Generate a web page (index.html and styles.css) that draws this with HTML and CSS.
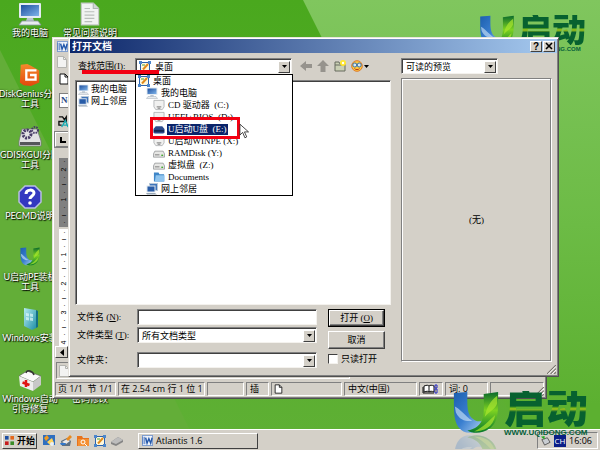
FILE: index.html
```html
<!DOCTYPE html>
<html lang="zh-CN">
<head>
<meta charset="utf-8">
<title>打开文档</title>
<link rel="stylesheet" href="styles.css">
</head>
<body>
<svg class="defs" aria-hidden="true">
  <defs>
    <linearGradient id="gBlue" x1="0" y1="0" x2="1" y2="1"><stop offset="0" stop-color="#1c5fae"/><stop offset=".5" stop-color="#3a7fd0"/><stop offset="1" stop-color="#b8d8f4"/></linearGradient>
    <linearGradient id="gGreen" x1="0" y1="0" x2="0" y2="1"><stop offset="0" stop-color="#0a6a2c"/><stop offset=".45" stop-color="#7ed321"/><stop offset="1" stop-color="#06782c"/></linearGradient>
    <linearGradient id="gPc" x1="0" y1="0" x2="1" y2="1"><stop offset="0" stop-color="#1d4f9e"/><stop offset="1" stop-color="#7fb4ea"/></linearGradient>
    <linearGradient id="gOrange" x1="0" y1="0" x2="0" y2="1"><stop offset="0" stop-color="#f58a2c"/><stop offset="1" stop-color="#e3480c"/></linearGradient>
    <linearGradient id="gTeal" x1="0" y1="0" x2="1" y2="1"><stop offset="0" stop-color="#b5ecf0"/><stop offset="1" stop-color="#1e8fa8"/></linearGradient>
    <symbol id="pc" viewBox="0 0 24 24"><rect x="1" y="1" width="22" height="15" rx="1" fill="#e4ebf2"/><rect x="3" y="3" width="18" height="11" fill="url(#gPc)"/><path d="M9 16h6l1 3H8z" fill="#b9c4cf"/><path d="M4 19h16l3 4H1z" fill="#e8ecef" stroke="#8a97a3" stroke-width=".8"/></symbol>
    <symbol id="net" viewBox="0 0 12 12"><rect x="3.500" y=".5" width="8" height="7" fill="#3f75bb" stroke="#b9c8d8"/><rect x="1" y="3" width="8" height="6" fill="#285ca8" stroke="#dfe7ee"/><path d="M0 10h9l2 1.500H1z" fill="#9aa8b6"/></symbol>
    <symbol id="desk" viewBox="0 0 12 12"><rect x="1.500" y="1.500" width="9" height="9" fill="#fff8dc" stroke="#2b62b0"/><path d="M0 0h3v3H0zM9 0h3v3H9zM0 9h3v3H0zM9 9h3v3H9z" fill="#4b86cc"/><path d="M4 8.500L9 3" stroke="#e08a1c" stroke-width="2"/><path d="M3 4h3" stroke="#49a03a"/></symbol>
    <symbol id="drive" viewBox="0 0 13 12"><path d="M2 4h9l1.500 3v3.500H.5V7z" fill="#e7e7e5" stroke="#8d9093" stroke-width=".8"/><path d="M2 8h5" stroke="#777"/><path d="M9 8.500h2" stroke="#44a830" stroke-width="1.500"/></symbol>
    <symbol id="disc" viewBox="0 0 13 12"><path d="M1 1h11v7l-2 3H3L1 8z" fill="#f1f1f0" stroke="#a4a7aa" stroke-width=".8"/><path d="M4 8h5M5 9.500h3" stroke="#777"/></symbol>
    <symbol id="usb" viewBox="0 0 13 12"><path d="M3 3h7l2.500 3v4L11 11H2L.5 10V6z" fill="#2d4c8d"/><path d="M1 7h11v2H1z" fill="#14264f"/></symbol>
    <symbol id="folder" viewBox="0 0 13 12"><path d="M1 1h5l1 2h5v8H1z" fill="#3e86c8"/><path d="M3 4h9.500v7H2z" fill="#8fc4ee"/></symbol>
    <symbol id="sheet" viewBox="0 0 18 22"><path d="M1 1h11l5 5v15H1z" fill="#f1f3f2" stroke="#c3c9c5"/><path d="M12 1v5h5" fill="#d1d8d5" stroke="#adb7b1"/><path d="M4 6h5M4 9h9M4 12h9M4 15h9M4 18h7" stroke="#b9bfbb"/></symbol>
    <symbol id="blank" viewBox="0 0 10 12"><path d="M.5.5h6l3 3v8h-9z" fill="#f3f3f2" stroke="#b4b4b0"/><path d="M6.500.5v3h3" fill="none" stroke="#b4b4b0"/></symbol>
    <symbol id="page" viewBox="0 0 10 12"><path d="M1 1h5l3 3v7H1z" fill="#fff" stroke="#111"/><path d="M6 1v3h3" fill="none" stroke="#111"/></symbol>
    <symbol id="word" viewBox="0 0 12 12"><rect x=".5" y=".5" width="11" height="11" fill="#eef3fb" stroke="#7b9bd0"/><path d="M1 2v8M3 2v8" stroke="#4471bd"/><path d="M4 3l1.500 6L7.500 4l2 5L11 3" fill="none" stroke="#2458aa" stroke-width="1.500"/></symbol>
    <symbol id="umark" viewBox="0 0 48 52"><path d="M1 2l14-1c0 14-1 24 7 29 5 3 8 1 11-1-5 13-14 17-22 13C2 38 1 25 1 14z" fill="url(#gBlue)"/><path d="M32 3l15-2c0 19 1 31-9 38-8 6-18 5-23 2 8-1 14-6 16-13 2-8 1-16 1-25z" fill="url(#gGreen)"/><path d="M46 5c-8 6-11 13-13 22 5-6 11-8 13-14zM44 25c-6 5-12 13-22 17 10 0 20-4 22-17z" fill="#a6e32d" opacity=".75"/><path d="M2 16c5 2 10 9 18 15-5 1-13 0-17-9z" fill="#c7e0f6" opacity=".65"/></symbol>
    <symbol id="down" viewBox="0 0 7 4"><path d="M0 0h7L3.500 4z"/></symbol>
    <symbol id="grip" viewBox="0 0 10 10"><path d="M0 10L10 0M4 10l6-6M8 10l2-2" stroke="#77736c" stroke-width="1.200"/><path d="M1.500 10L10 1.500M5.500 10L10 5.500" stroke="#fff"/></symbol>
  </defs>
</svg>

<main class="desktop">
  <svg class="wallpaper" viewBox="0 0 600 450" preserveAspectRatio="none" aria-hidden="true">
    <defs>
      <linearGradient id="gBase" x1="0" y1="0" x2="0" y2="1"><stop offset="0" stop-color="#4aa81e"/><stop offset="1" stop-color="#5fb035"/></linearGradient>
      <linearGradient id="gLight" x1="0" y1="0" x2="0" y2="1"><stop offset="0" stop-color="#80c65e"/><stop offset=".5" stop-color="#6cbb45"/><stop offset=".9" stop-color="#5cb030"/></linearGradient>
    </defs>
    <rect width="600" height="450" fill="url(#gBase)"/>
    <path d="M0 50L200 450H0z" fill="#63ae38"/>
    <path d="M303 0H600V450H528z" fill="url(#gLight)"/>
  </svg>

  <div class="brand brand-wall" aria-hidden="true">
    <svg><use href="#umark"/></svg>
    <div><b>启动</b><span>WWW.UQIDONG.COM</span></div>
  </div>

  <nav class="icons">
    <a href="#"><svg><use href="#pc"/></svg><span>我的电脑</span></a>
    <a href="#"><svg viewBox="0 0 24 26"><path d="M2 2L9 1l4 2 9 5v13l-9 4-8-1-4-3z" fill="url(#gOrange)"/><path d="M19 8H8v10h10v-5h-6" fill="none" stroke="#fff" stroke-width="2.500"/></svg><span>DiskGenius分区<br>工具</span></a>
    <a href="#"><svg viewBox="0 0 24 24"><path d="M4 5h15l4 12v5H1v-5z" fill="#e2e2e4" stroke="#77777c" stroke-width=".8"/><path d="M2 18h20v3H2z" fill="#55555b"/><circle cx="9" cy="10" r="4" fill="none" stroke="#463a66" stroke-width="3" stroke-dasharray="2 1"/><circle cx="17" cy="6" r="3" fill="none" stroke="#463a66" stroke-width="2" stroke-dasharray="1.500 1"/></svg><span>GDISKGUI分区<br>工具</span></a>
    <a href="#"><svg viewBox="0 0 24 24"><path d="M7 1h10l6 6v10l-6 6H7l-6-6V7z" fill="#3338c0" stroke="#b9bde2" stroke-width="1.500"/><path d="M8 9c0-5 8-5 8-1 0 3-4 3-4 6" fill="none" stroke="#fff" stroke-width="3"/><circle cx="12" cy="18" r="1.800" fill="#fff"/></svg><span>PECMD说明</span></a>
    <a href="#"><svg class="small"><use href="#umark"/></svg><span>U启动PE装机<br>工具</span></a>
    <a href="#"><svg viewBox="0 0 24 24"><path d="M6 1l12 2v18l-4 2-8-4z" fill="url(#gTeal)"/><path d="M18 3l2 1v16l-2 1z" fill="#147088"/><path d="M8 6l3 .5v3L8 9zM12 6.500l3 .5v3l-3-.5zM8 10l3 .5v3L8 13zM12 10.500l3 .5v3l-3-.5z" fill="#dff8fa" opacity=".7"/></svg><span>Windows安装</span></a>
    <a href="#"><svg viewBox="0 0 24 24"><path d="M1 8L9 3l14 5-8 6z" fill="#fafafa" stroke="#555" stroke-width=".6"/><path d="M1 8l14 6v9L2 18z" fill="#eee"/><path d="M15 14l8-6v9l-8 6z" fill="#c8c8c8"/><path d="M8 5c1-4 7-2 8 2" fill="none" stroke="#333" stroke-width="1.500"/><path d="M8 12v7M4.500 14.500l7 2.500" stroke="#e01515" stroke-width="2.500"/></svg><span>Windows启动<br>引导修复</span></a>
  </nav>
  <nav class="icons icons-second">
    <a href="#"><svg><use href="#sheet"/></svg><span>常见问题说明</span></a>
    <a href="#"><svg><use href="#pc"/></svg><span>密码修改</span></a>
  </nav>

  <section class="window editor" aria-label="Atlantis">
    <div class="toolstrip">
      <svg class="app"><use href="#word"/></svg>
      <svg class="doc"><use href="#blank"/></svg>
      <svg class="new"><use href="#page"/></svg>
      <div class="style-box">No</div>
      <svg class="find" viewBox="0 0 12 14"><path d="M1 2h4l2 3 2-3v5H1v4h3" fill="none" stroke="#111" stroke-width="1.500"/><path d="M4 13l4-7 3 7M6 11h4" fill="none" stroke="#18a9b0" stroke-width="1.500"/></svg>
      <div class="tab-stop"><svg viewBox="0 0 6 6"><path d="M1 0v5h5" fill="none" stroke="#000" stroke-width="2"/></svg></div>
      <div class="ruler ruler-margin"><i>·</i><i>2</i><i>·</i><i>ı</i><i>·</i><i>1</i><i>·</i><i>ı</i><i>·</i></div>
      <div class="ruler"><i>·</i><i>ı</i><i>·</i><i>1</i><i>·</i><i>ı</i><i>·</i><i>2</i><i>·</i><i>ı</i><i>·</i><i>3</i><i>·</i><i>ı</i><i>·</i><i>4</i></div>
      <button class="scroll" aria-label="向左"><svg viewBox="0 0 4 7"><path d="M4 0v7L0 3.500z"/></svg></button>
      <div class="sheet-tab"><svg><use href="#blank"/></svg></div>
    </div>
    <footer class="status">
      <span class="c-page">页 1/1&nbsp;&nbsp;节 1/1</span>
      <span class="c-pos">在 2.54 cm 行 1 位 1</span>
      <span class="c-gap"></span>
      <span class="c-ins">插</span>
      <span class="c-doc"><svg><use href="#page"/></svg></span>
      <span class="c-lang">中文(中国)</span>
      <span class="c-book"><svg viewBox="0 0 16 10"><path d="M1 2c3-1 4-1 5 0 1-1 3-1 5 0v6c-2-1-4-1-5 0-1-1-2-1-5 0zM6 2v6" fill="#fff" stroke="#111"/><path d="M0 3v6h11" fill="none" stroke="#111"/><path d="M12 1h2v3h-2zM12 5h2v4h-2z" fill="#ffef5b" stroke="#1c22d8"/></svg></span>
      <span class="c-word">词: 0</span>
      <span class="c-end"><svg class="grip"><use href="#grip"/></svg></span>
    </footer>
  </section>

  <section class="window dialog" role="dialog" aria-labelledby="dlg-title">
    <header class="titlebar">
      <h1 id="dlg-title">打开文档</h1>
      <button aria-label="帮助">?</button>
      <button aria-label="关闭"><svg viewBox="0 0 8 8"><path d="M1 1l6 6M7 1L1 7" stroke="#000" stroke-width="1.600"/></svg></button>
    </header>
    <div class="dialog-body">
      <div class="browse">
        <div class="lookup">
          <label for="look">查找范围(<u>I</u>):</label>
          <div class="look-wrap">
            <div class="combo">
              <svg class="lead"><use href="#desk"/></svg>
              <select id="look"><option>桌面</option></select>
              <span class="arrow"><svg><use href="#down"/></svg></span>
            </div>
            <ul class="tree">
              <li><svg><use href="#desk"/></svg><span>桌面</span></li>
              <li class="l1"><svg><use href="#pc"/></svg><span>我的电脑</span></li>
              <li class="l2"><svg><use href="#disc"/></svg><span>CD 驱动器&nbsp; (C:)</span></li>
              <li class="l2"><svg><use href="#disc"/></svg><span>UEFI+BIOS&nbsp; (D:)</span></li>
              <li class="l2 selected"><svg><use href="#usb"/></svg><span>U启动U盘&nbsp; (E:)</span></li>
              <li class="l2"><svg><use href="#disc"/></svg><span>U启动WINPE (X:)</span></li>
              <li class="l2"><svg><use href="#drive"/></svg><span>RAMDisk (Y:)</span></li>
              <li class="l2"><svg><use href="#drive"/></svg><span>虚拟盘&nbsp; (Z:)</span></li>
              <li class="l2"><svg><use href="#folder"/></svg><span>Documents</span></li>
              <li class="l1"><svg><use href="#net"/></svg><span>网上邻居</span></li>
            </ul>
            <div class="mark-line"></div>
            <div class="mark-box"></div>
            <svg class="cursor" viewBox="0 0 11 17"><path d="M1 1v12l3-3 2.500 6 2-1L6 9.500h4.500z" fill="#fff" stroke="#222" stroke-width=".9"/></svg>
          </div>
          <div class="tools">
            <button aria-label="后退"><svg viewBox="0 0 12 12"><path d="M0 6l6-5v3h6v4H6v3z" fill="#96938d"/></svg></button>
            <button aria-label="向上"><svg viewBox="0 0 12 12"><path d="M6 0l6 6H8.500v6h-5V6H0z" fill="#96938d"/></svg></button>
            <button aria-label="新建文件夹"><svg viewBox="0 0 12 12"><path d="M1 2h4l1 2h5v7H1z" fill="#c9cfb3" stroke="#666b5e"/><path d="M1 5h10" stroke="#666b5e"/><circle cx="9" cy="3" r="3" fill="#ffe72e"/><circle cx="9" cy="3" r="1.200" fill="#fff"/></svg></button>
            <button class="view" aria-label="查看"><svg viewBox="0 0 12 12"><circle cx="6" cy="6" r="5.300" fill="#ffc83d" stroke="#dd7a2d"/><circle cx="3.800" cy="5" r="2" fill="#dbeaf2" stroke="#3670a6"/><circle cx="8.200" cy="5" r="2" fill="#dbeaf2" stroke="#3670a6"/><path d="M3.500 8.500c1 1.500 4 1.500 5 0" fill="none" stroke="#b33a1d"/></svg><svg class="caret"><use href="#down"/></svg></button>
          </div>
        </div>
        <ul class="files">
          <li><svg><use href="#pc"/></svg>我的电脑</li>
          <li><svg><use href="#net"/></svg>网上邻居</li>
        </ul>
        <form class="form">
          <div class="fields">
            <div class="field"><label for="fname">文件名 (<u>N</u>):</label><input id="fname" type="text"></div>
            <div class="field"><label for="ftype">文件类型 (<u>T</u>):</label><div class="combo"><select id="ftype"><option>所有文档类型</option></select><span class="arrow"><svg><use href="#down"/></svg></span></div></div>
            <div class="field field-folder"><label for="fdir">文件夹：</label><div class="combo"><select id="fdir"><option></option></select><span class="arrow"><svg><use href="#down"/></svg></span></div></div>
          </div>
          <div class="actions">
            <button type="button" class="btn primary">打开 (<u>O</u>)</button>
            <button type="button" class="btn">取消</button>
            <label class="check"><input type="checkbox">只读打开</label>
          </div>
        </form>
      </div>
      <aside class="preview">
        <div class="combo"><select aria-label="预览"><option>可读的预览</option></select><span class="arrow"><svg><use href="#down"/></svg></span></div>
        <div class="preview-pane">(无)</div>
      </aside>
    </div>
    <svg class="grip"><use href="#grip"/></svg>
  </section>

  <footer class="taskbar">
    <button class="start"><svg viewBox="0 0 10 10"><path d="M0 0h4v4H0z" fill="#1d4fa3"/><path d="M6 0h4v4H6z" fill="#e4671b"/><path d="M0 6h4v4H0z" fill="#c61d1d"/><path d="M6 6h4v4H6z" fill="#3a8c26"/></svg>开始</button>
    <div class="quick">
      <svg viewBox="0 0 12 12"><rect width="12" height="10" fill="#2f6fc0"/><path d="M1 3l3-3 2 3-3 3z" fill="#f39b20"/><path d="M4 7l5-4 2 5-3 3z" fill="#ffd35c"/><circle cx="9" cy="9" r="2" fill="#e8eff8"/></svg>
      <svg viewBox="0 0 12 12"><path d="M1 6l6-3 4 3-1 5H2z" fill="#5f6f80"/><path d="M2 7l5-3 3 2-4 3z" fill="#e8e8e8"/><path d="M6 4l4-4 2 2-4 4z" fill="#e88a1e"/><path d="M0 8h6l-1 2H1z" fill="#3277c9"/></svg>
      <svg viewBox="0 0 12 12"><path d="M0 1h5l1 2h6v8H0z" fill="#e8731c"/><path d="M1 4h11v7H1z" fill="#f48f32"/><circle cx="6" cy="7" r="2" fill="none" stroke="#fff"/><path d="M7.500 8.500L10 11" stroke="#fff"/></svg>
      <svg><use href="#desk"/></svg>
      <svg viewBox="0 0 12 12"><path d="M0 7l7-5 5 3v2l-7 4-5-2z" fill="#858585"/><path d="M0 7l7-5 5 3-7 4z" fill="#bdbdbd"/></svg>
    </div>
    <button class="task"><svg><use href="#word"/></svg>Atlantis 1.6</button>
    <div class="tray">
      <svg viewBox="0 0 12 12"><path d="M2 5l6-2 3 5-6 3z" fill="#c9cdd1" stroke="#555"/><path d="M1 2l4-1v4z" fill="#25a823"/></svg>
      <span class="ime">CH</span>
      <time>16:06</time>
    </div>
  </footer>

  <div class="brand brand-mark">
    <div class="u"><svg><use href="#umark"/></svg><svg class="mirror" aria-hidden="true"><use href="#umark"/></svg></div>
    <div><b>启动</b><span>WWW.UQIDONG.COM</span></div>
  </div>
</main>
</body>
</html>
```
FILE: styles.css
```css
:root {
  --face: #d4d0c8;
  --shade: #808080;
  --dark: #404040;
  --light: #ffffff;
  --red: #f20012;
}

* { box-sizing: border-box; }

body {
  margin: 0;
  font: 9px/12px "Liberation Serif", "Noto Sans CJK SC", serif;
  color: #000;
}

svg { display: block; flex: none; overflow: visible; }
button, input, select { font: inherit; color: inherit; margin: 0; padding: 0; }
ul { list-style: none; margin: 0; padding: 0; }
.defs { position: absolute; width: 0; height: 0; }

/* Desktop */
.desktop { position: relative; height: 100vh; overflow: hidden; background: #5cb131; }
.wallpaper { position: absolute; inset: 0; width: 100%; height: 100%; }

.icons {
  position: absolute;
  top: 2px;
  left: 0;
  width: 60px;
  display: flex;
  flex-direction: column;
}
.icons-second { left: 60px; height: 427px; justify-content: space-between; }
.icons a {
  height: 61px;
  display: flex;
  flex-direction: column;
  align-items: center;
  gap: 2px;
  color: #fff;
  font: 9px/10px Lato, "Noto Sans CJK SC", sans-serif;
  text-align: center;
  text-decoration: none;
  white-space: nowrap;
  text-shadow: 1px 1px 1px #000, 0 0 2px #1c3a0c;
}
.icons svg { width: 24px; height: 24px; }
.icons .small { width: 20px; }

/* Brand */
.brand { position: absolute; display: flex; color: #05603a; font-family: "Liberation Sans", "Noto Sans CJK SC", sans-serif; }
.brand b, .brand span { display: block; white-space: nowrap; }
.brand b {
  font-weight: 900;
  background: linear-gradient(#07612f 0 42%, #5aa51c 46%, #a5c81c 50%, #07612f 58%);
  background-clip: text;
  -webkit-background-clip: text;
  color: transparent;
}
.brand span { font-weight: bold; }
.brand-wall { top: 15px; right: 14px; gap: 3px; }
.brand-wall svg { width: 36px; height: 38px; }
.brand-wall b { font-size: 34px; line-height: 30px; }
.brand-wall span { font-size: 6px; line-height: 8px; }
.brand-mark { right: 12px; bottom: 0; height: 59px; gap: 4px; }
.brand-mark svg { width: 48px; height: 50px; }
.brand-mark .u { height: 58px; overflow: hidden; }
.brand-mark .mirror { transform: scaleY(-1); opacity: .25; margin-top: -14px; }
.brand-mark b { font-size: 42px; line-height: 36px; }
.brand-mark span { font-size: 8px; line-height: 12px; }

/* Windows */
.window {
  position: absolute;
  display: flex;
  flex-direction: column;
  background: var(--face);
  border: 1px solid;
  border-color: #e6e3dd #505050 #505050 #e6e3dd;
  box-shadow: inset 1px 1px #fff, inset -1px -1px var(--shade);
}
.grip { position: absolute; right: 2px; bottom: 2px; width: 9px; height: 9px; }

/* Editor window, mostly behind the dialog */
.editor { left: 52px; right: 53px; top: 37px; bottom: 51px; padding: 2px; }
.toolstrip { width: 100%; flex: 1; display: flex; flex-direction: column; align-items: flex-start; }
.app { width: 11px; height: 11px; margin: 1px 2px 4px; }
.doc { width: 10px; height: 12px; margin-left: 2px; }
.new { width: 10px; height: 12px; margin: 5px 4px 8px; }
.style-box { width: 24px; height: 15px; margin-left: 4px; padding-left: 1px; background: #fff; border: 1px solid var(--shade); color: #294a85; font-weight: bold; }
.find { width: 11px; height: 13px; margin: 7px 3px 4px; }
.tab-stop { width: 18px; height: 15px; padding: 4px; border: 1px solid; border-color: #fff var(--shade) var(--shade) #fff; outline: 1px solid var(--shade); }
.tab-stop svg { width: 6px; height: 6px; }
.ruler {
  width: 10px;
  flex: 120;
  margin-left: 4px;
  display: flex;
  flex-direction: column;
  justify-content: space-around;
  align-items: center;
  overflow: hidden;
  background: #fff;
  font: 7px/7px "Liberation Sans", sans-serif;
}
.ruler i { font-style: normal; transform: rotate(-90deg); }
.ruler-margin { flex: 70; margin-top: 11px; margin-bottom: 2px; background: #808080; }
.scroll { width: 13px; height: 12px; display: grid; place-items: center; background: var(--face); border: 1px solid; border-color: #fff var(--dark) var(--dark) #fff; }
.scroll svg { width: 4px; height: 7px; }
.sheet-tab { width: 294px; height: 17px; margin: 4px 0 3px 1px; padding: 2px; border: 1px solid; border-color: var(--shade) #fff #fff var(--shade); }
.sheet-tab svg { width: 10px; height: 12px; }

.status { display: flex; gap: 2px; font: 9px/12px "Open Sans", "Noto Sans CJK SC", sans-serif; white-space: nowrap; }
.status span { height: 14px; padding: 0 3px; border: 1px solid; border-color: var(--shade) #fff #fff var(--shade); overflow: hidden; }
.status .c-page { width: 61px; padding: 0 2px; }
.status .c-pos { width: 87px; padding: 0 2px; }
.status .c-gap { width: 37px; }
.status .c-ins { width: 23px; }
.status .c-doc { width: 71px; padding: 1px 2px; }
.status .c-lang { width: 73px; }
.status .c-book { width: 24px; padding: 1px 3px; }
.status .c-word { width: 43px; }
.status .c-end { flex: 1; }
.c-doc svg { width: 9px; height: 10px; }
.c-book svg { width: 16px; height: 10px; }

/* Open dialog */
.dialog { left: 68px; right: 41px; top: 37px; bottom: 73px; padding: 1px; }
.titlebar {
  height: 14px;
  display: flex;
  align-items: center;
  gap: 1px;
  padding: 0 2px;
  background: linear-gradient(90deg, #0c2669, #a6caf0);
  color: #fff;
}
.titlebar h1 { flex: 1; margin: 0; font: bold 10px/14px "Noto Sans CJK SC", sans-serif; }
.titlebar button {
  width: 12px;
  height: 11px;
  display: grid;
  place-items: center;
  background: var(--face);
  border: 1px solid;
  border-color: #fff var(--dark) var(--dark) #fff;
  color: #000;
  font: bold 10px/9px "Liberation Sans", sans-serif;
}
.titlebar svg { width: 8px; height: 8px; }

.dialog-body { flex: 1; display: grid; grid-template-columns: 1fr 151px; gap: 10px; padding: 5px 5px 7px; }
.browse { display: flex; flex-direction: column; min-width: 0; }

.combo, .field input, .files {
  background: #fff;
  border: 1px solid;
  border-color: var(--shade) #f4f2ee #f4f2ee var(--shade);
  box-shadow: inset 1px 1px var(--dark);
}
.combo { height: 16px; display: flex; align-items: center; padding: 1px 1px 0 2px; }
.combo select {
  flex: 1;
  min-width: 0;
  height: 12px;
  padding-left: 2px;
  appearance: none;
  border: 0;
  background: transparent;
  outline: 0;
}
.arrow {
  width: 12px;
  height: 12px;
  display: grid;
  place-items: center;
  background: var(--face);
  border: 1px solid;
  border-color: #fff var(--dark) var(--dark) #fff;
}
.arrow svg { width: 5px; height: 3px; }
.lead { width: 12px; height: 12px; margin: 0 2px 0 1px; }

.lookup { display: flex; align-items: center; padding-left: 3px; }
.lookup label { width: 57px; white-space: nowrap; }
.look-wrap { position: relative; flex: 1; }
.tools { width: 99px; display: flex; gap: 5px; padding-left: 8px; }
.tools button { display: flex; align-items: center; gap: 1px; border: 0; background: none; }
.tools svg { width: 12px; height: 12px; }
.tools .caret { width: 5px; height: 3px; }

.tree {
  position: absolute;
  z-index: 2;
  top: 16px;
  left: 0;
  right: -1px;
  padding: 0 2px;
  background: #fff;
  border: 1px solid #000;
}
.tree li { height: 12px; display: flex; align-items: center; gap: 2px; white-space: nowrap; }
.tree svg { width: 12px; height: 12px; }
.tree .l1 { padding-left: 8px; }
.tree .l2 { padding-left: 15px; }
.tree span { padding: 0 1px; }
.tree .selected span { background: #0a246a; color: #fff; line-height: 11px; }

/* Tutorial annotations drawn over the list */
.mark-line, .mark-box, .cursor { position: absolute; z-index: 3; }
.mark-line { left: -53px; top: 12px; width: 77px; height: 4px; background: var(--red); }
.mark-box { left: 15px; top: 59px; width: 90px; height: 22px; border: 3px solid var(--red); }
.cursor { left: 104px; top: 65px; width: 10px; height: 16px; }

.files { flex: 1; margin-top: 6px; padding: 2px; }
.files li { height: 12px; display: flex; align-items: center; gap: 2px; }
.files svg { width: 11px; height: 11px; }

.form { display: flex; gap: 11px; margin-top: 4px; padding-right: 6px; }
.fields { flex: 1; display: flex; flex-direction: column; gap: 2px; }
.field { display: flex; align-items: center; }
.field label { width: 62px; padding-left: 2px; white-space: nowrap; }
.field input, .field .combo { flex: 1; min-width: 0; height: 16px; }
.field input { padding: 0 3px; outline: 0; }
.field-folder { margin-top: 7px; }
.actions { width: 57px; display: flex; flex-direction: column; gap: 4px; }
.btn {
  height: 18px;
  background: var(--face);
  border: 1px solid;
  border-color: #fff var(--dark) var(--dark) #fff;
  box-shadow: inset -1px -1px var(--shade);
}
.primary { outline: 1px solid #000; outline-offset: -1px; border-width: 2px; }
.check { display: flex; align-items: center; gap: 3px; white-space: nowrap; }
.check input {
  appearance: none;
  width: 10px;
  height: 10px;
  background: #fff;
  border: 1px solid;
  border-color: var(--dark) #f4f2ee #f4f2ee var(--dark);
}

.preview { display: flex; flex-direction: column; gap: 4px; padding-bottom: 6px; }
.preview .combo { width: 97px; }
.preview-pane {
  flex: 1;
  display: grid;
  place-items: center;
  border: 1px solid;
  border-color: var(--shade) #fff #fff var(--shade);
  box-shadow: inset -1px -1px var(--shade), inset 1px 1px #fff;
}

/* Taskbar */
.taskbar {
  position: absolute;
  left: 0;
  right: 0;
  bottom: 0;
  height: 21px;
  display: flex;
  align-items: center;
  padding: 1px 2px 0;
  background: var(--face);
  border-top: 1px solid #fff;
  font-family: "Open Sans", "Noto Sans CJK SC", sans-serif;
}
.start, .task {
  height: 16px;
  display: flex;
  align-items: center;
  gap: 3px;
  background: var(--face);
  border: 1px solid;
  border-color: #fff var(--dark) var(--dark) #fff;
}
.start { width: 35px; padding-left: 2px; font-weight: bold; white-space: nowrap; }
.start svg { width: 9px; height: 9px; }
.quick { display: flex; gap: 5px; margin: 0 15px 0 6px; }
.quick svg { width: 12px; height: 12px; }
.task { width: 120px; padding-left: 3px; }
.task svg { width: 11px; height: 11px; }
.tray {
  width: 61px;
  height: 17px;
  margin-left: auto;
  display: flex;
  align-items: center;
  gap: 3px;
  padding-left: 2px;
  border: 1px solid;
  border-color: var(--shade) #fff #fff var(--shade);
}
.tray svg { width: 11px; height: 11px; }
.ime { width: 12px; background: #0b1f87; color: #fff; text-align: center; font-size: 8px; }
```
